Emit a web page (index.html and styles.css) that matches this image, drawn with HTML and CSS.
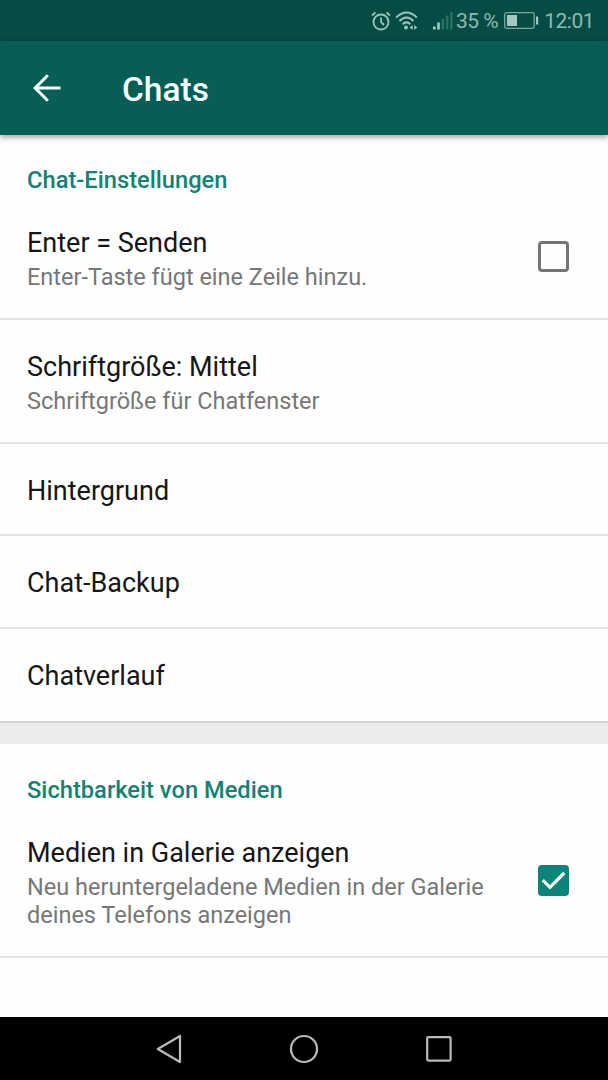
FILE: index.html
```html
<!DOCTYPE html>
<html lang="de">
<head>
  <meta charset="UTF-8" />
  <title>Chats</title>
  <link rel="stylesheet" href="styles.css">
</head>
<body>

  <div class="statusbar">
    <svg class="alarm" width="20" height="20" viewBox="0 0 20 20">
      <circle cx="10" cy="11" r="7.5" />
      <path d="M10 6.500V11l3 3M1 4.500 4.500 1.300M19 4.500 15.500 1.300" />
    </svg>
    <svg class="wifi" width="24" height="20" viewBox="0 0 24 20">
      <path d="M1.200 6.500Q11.500-3.500 21.800 6.500M4.500 10Q11.500 3 18.500 10M7.700 13.200Q11.500 9.700 15.200 13.200" />
      <path class="solid" d="M17.600 14v5l-3-2.500zM19.200 14v5l3-2.500z" />
      <circle class="solid" cx="11" cy="16.500" r="1.900" />
    </svg>
    <svg class="signal" width="20" height="19" viewBox="0 0 20 19">
      <path d="M0 15.500h2.600v3H0zM4.200 11.500h2.600v7H4.200z" />
      <path class="weak" d="M8.600 8h2.500v10.500H8.600zM12.900 4.500h2.500v14h-2.500zM17.100 1h2.500v17.500h-2.500z" />
    </svg>
    <span class="percent">35 %</span>
    <svg class="battery" width="35" height="17" viewBox="0 0 35 17">
      <rect class="frame" x=".7" y=".7" width="29.500" height="15.600" rx="2" />
      <path d="M3 3h10v11H3zM32 4.500h2.200v8H32z" />
    </svg>
    <span class="time">12:01</span>
  </div>

  <header class="toolbar">
    <svg class="back" width="28" height="28" viewBox="0 0 28 28">
      <path d="M27.500 14H2.500M14.800 1.300 2.200 14l12.600 12.700" />
    </svg>
    <h1>Chats</h1>
  </header>

  <main>
    <section>
      <h2>Chat-Einstellungen</h2>
      <div class="row">
        <div class="text">
          <div class="title">Enter = Senden</div>
          <div class="summary">Enter-Taste fügt eine Zeile hinzu.</div>
        </div>
        <span class="checkbox"></span>
      </div>
      <div class="row">
        <div class="text">
          <div class="title">Schriftgröße: Mittel</div>
          <div class="summary">Schriftgröße für Chatfenster</div>
        </div>
      </div>
      <div class="row"><div class="title">Hintergrund</div></div>
      <div class="row"><div class="title">Chat-Backup</div></div>
      <div class="row"><div class="title">Chatverlauf</div></div>
    </section>

    <div class="separator"></div>

    <section class="media">
      <h2>Sichtbarkeit von Medien</h2>
      <div class="row">
        <div class="text">
          <div class="title">Medien in Galerie anzeigen</div>
          <div class="summary">Neu heruntergeladene Medien in der Galerie deines Telefons anzeigen</div>
        </div>
        <span class="checkbox checked">
          <svg width="31" height="31" viewBox="0 0 31 31"><path d="M4.800 15.200 12 22.300 26.200 8" /></svg>
        </span>
      </div>
    </section>
  </main>

  <nav class="navbar">
    <svg width="26" height="30" viewBox="0 0 26 30"><path d="M24 2v26L1.800 15z" /></svg>
    <svg width="30" height="30" viewBox="0 0 30 30"><circle cx="15" cy="15" r="13" /></svg>
    <svg width="26" height="26" viewBox="0 0 26 26"><rect x="1.200" y="1.200" width="23.400" height="23.400" rx="1" /></svg>
  </nav>

</body>
</html>
```

FILE: styles.css
```css
* {
  box-sizing: border-box;
}

body {
  margin: 0;
  height: 1080px;
  display: flex;
  flex-direction: column;
  overflow: hidden;
  background: #fefefe;
  font-family: Roboto, sans-serif;
}

h1, h2 {
  margin: 0;
  font-weight: 500;
}

svg {
  display: block;
  flex: none;
  fill: none;
}

/* Status bar */
.statusbar {
  height: 41px;
  padding-right: 14px;
  display: flex;
  align-items: center;
  justify-content: flex-end;
  background: #054d44;
  color: #90b8b0;
  font-size: 21px;
  letter-spacing: -0.5px;
  white-space: nowrap;
}

.alarm, .wifi {
  stroke: #9bc6bd;
  stroke-width: 1.8;
}

.wifi {
  margin-left: 4px;
  stroke-width: 2.1;
}

.wifi .solid {
  fill: #9bc6bd;
  stroke: none;
}

.signal {
  margin-left: 14px;
  fill: #a5cdc4;
}

.signal .weak {
  fill: #2d6d63;
}

.percent {
  margin-left: 3px;
}

.battery {
  margin-left: 6px;
  fill: #a3c8c0;
}

.battery .frame {
  fill: none;
  stroke: #7aa69d;
  stroke-width: 1.3;
}

.time {
  margin-left: 5px;
}

/* Toolbar */
.toolbar {
  position: relative;
  height: 94px;
  padding-left: 33px;
  display: flex;
  align-items: center;
  background: #075e54;
  color: #f5fffd;
  box-shadow: 0 2px 6px rgba(0, 0, 0, 0.4);
}

.toolbar h1 {
  margin-left: 61px;
  padding-top: 2px;
  font-size: 33.500px;
}

.back {
  stroke: #f5fffd;
  stroke-width: 3;
}

/* Settings */
main {
  flex: 1;
}

h2 {
  padding: 31px 27px 2px;
  color: #128273;
  font-size: 23.700px;
  line-height: 28px;
}

.row {
  display: flex;
  align-items: center;
  padding: 31px 39px 26.400px 27px;
  border-bottom: 2px solid #e2e2e2;
}

.text {
  flex: 1;
  padding-bottom: 0.600px;
}

.title {
  color: #161616;
  font-size: 27px;
  line-height: 33px;
}

.summary {
  max-width: 470px;
  margin-top: 3px;
  color: #777;
  font-size: 23.500px;
  line-height: 28px;
}

section:first-child .row:last-child {
  padding-bottom: 28px;
  border-bottom: none;
}

.media {
  padding-top: 1px;
}

.checkbox {
  width: 31px;
  height: 31px;
  margin-bottom: 5px;
  border: 3px solid #757575;
  border-radius: 4px;
}

.checked {
  border: none;
  background: #0b8578;
}

.checked svg {
  stroke: #fff;
  stroke-width: 3.2;
}

.separator {
  height: 23px;
  border-top: 2px solid #d3d3d3;
  background: #ececec;
}

/* Navigation keys */
.navbar {
  height: 63px;
  display: flex;
  align-items: center;
  justify-content: center;
  gap: 107px;
  background: #000;
  stroke: #bababa;
  stroke-width: 2.2;
  stroke-linejoin: round;
}
```
